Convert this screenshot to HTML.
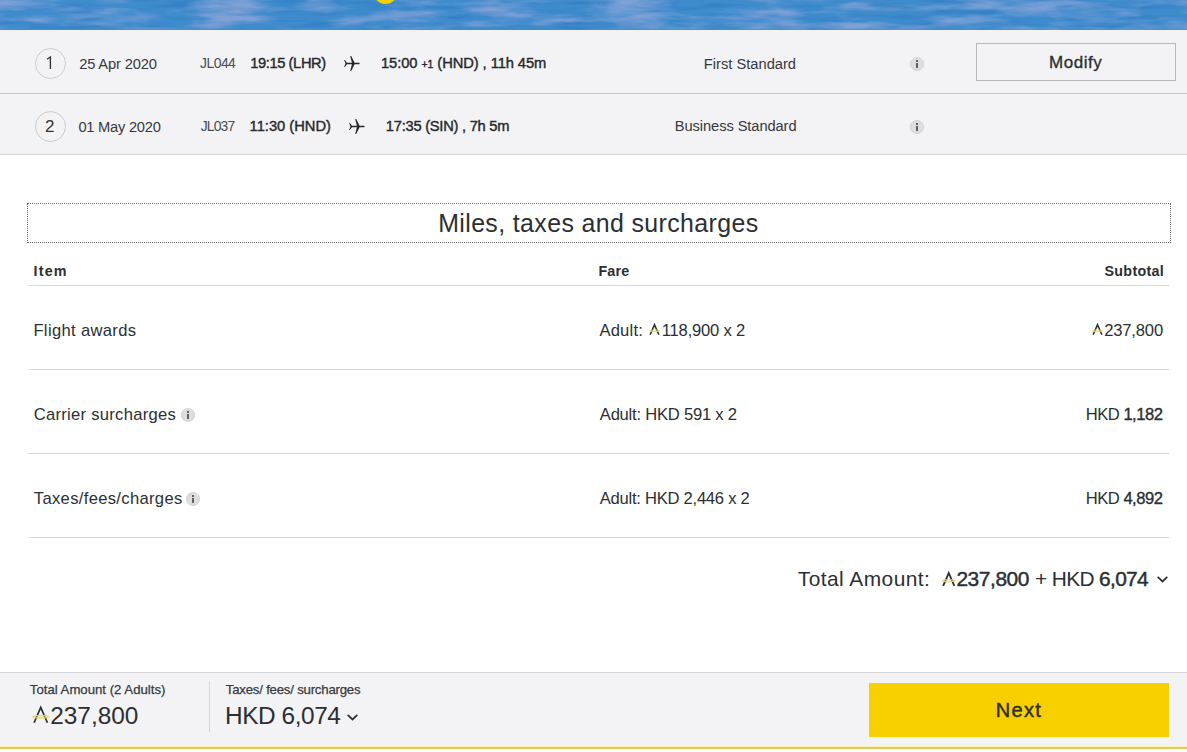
<!DOCTYPE html>
<html><head><meta charset="utf-8">
<style>
*{margin:0;padding:0;box-sizing:border-box}
html,body{width:1187px;height:752px;overflow:hidden;background:#fff;font-family:"Liberation Sans",sans-serif;color:#2b2f33}
.abs{position:absolute;white-space:nowrap}
#banner{position:absolute;left:0;top:0;width:1187px;height:30px;background:#4d8fce;overflow:hidden}
.row{position:absolute;left:0;width:1187px;background:#f3f3f5}
#r1{top:30px;height:64px;border-bottom:1px solid #c6c6c8}
#r2{top:94px;height:61px;border-bottom:1px solid #d4d4d6}
.circ{position:absolute;width:31px;height:31px;border:1px solid #cdcdcd;border-radius:50%}
.info{position:absolute;width:14px;height:14px;border-radius:50%;background:#dedede;border:1px solid #d2d2d2}
.info:before{content:"";position:absolute;left:5px;top:2px;width:2px;height:2px;background:#606060}
.info:after{content:"";position:absolute;left:5px;top:5px;width:2px;height:5px;background:#606060}
#modify{position:absolute;left:976px;top:43px;width:200px;height:38px;border:1px solid #b8b8ba;background:#f3f3f5}
#title{position:absolute;left:27px;top:203px;width:1144px;height:40px;border:1px dotted #6a6a6a}
.hr{position:absolute;left:29px;width:1140px;height:1px;background:#d6d6d6}
#footer{position:absolute;left:0;top:672px;width:1187px;height:80px;background:#f3f3f5;border-top:1px solid #d6d6d8}
#yline{position:absolute;left:0;top:746px;width:1187px;height:4px;background:linear-gradient(#faf3b0 0 1px,#dfcb66 1px 3px,#fdfbc8 3px 4px)}
#wline{position:absolute;left:0;top:750px;width:1187px;height:2px;background:#fff}
#next{position:absolute;left:869px;top:683px;width:300px;height:54px;background:#f8d000}
svg{position:absolute;overflow:visible}
.sb{-webkit-text-stroke:0.35px currentColor}
</style></head><body>
<div id="banner">
<svg width="1187" height="30" style="left:0;top:0">
<defs>
<filter id="tx1" x="0" y="0" width="100%" height="100%" color-interpolation-filters="sRGB"><feTurbulence type="fractalNoise" baseFrequency="0.015 0.09" numOctaves="4" seed="4"/><feColorMatrix values="0 0 0 0 0.50  0 0 0 0 0.63  0 0 0 0 0.84  2.8 0 0 0 -1.15"/></filter>
<filter id="tx2" x="0" y="0" width="100%" height="100%" color-interpolation-filters="sRGB"><feTurbulence type="fractalNoise" baseFrequency="0.02 0.2" numOctaves="2" seed="11"/><feColorMatrix values="0 0 0 0 0.20  0 0 0 0 0.50  0 0 0 0 0.78  2.4 0 0 0 -1.0"/></filter>
</defs>
<rect width="1187" height="30" fill="#3f8ccd"/>
<rect width="1187" height="30" filter="url(#tx2)"/>
<rect width="1187" height="30" filter="url(#tx1)"/>
<rect y="29" width="1187" height="1" fill="#5a86b8" opacity="0.5"/>
<circle cx="385.5" cy="-8" r="12" fill="#f8d000"/>
</svg>
</div>
<div class="row" id="r1"></div>
<div class="row" id="r2"></div>
<div class="circ" style="left:35px;top:48px"></div>
<div class="circ" style="left:35px;top:111px"></div>
<div class="info" style="left:910px;top:57px"></div>
<div class="info" style="left:910px;top:120px"></div>
<div id="modify"></div>
<div id="title"></div>
<div class="hr" style="top:285px"></div>
<div class="hr" style="top:369px"></div>
<div class="hr" style="top:453px"></div>
<div class="hr" style="top:537px"></div>
<div class="info" style="left:181px;top:408px"></div>
<div class="info" style="left:186px;top:492px"></div>
<div id="footer"></div>
<div style="position:absolute;left:209px;top:681px;width:1px;height:51px;background:#d4d4d6"></div>
<div id="next"></div>
<div id="yline"></div>
<div id="wline"></div>
<svg class="ic" width="8" height="14" style="left:45px;top:56px"><path d="M2 3.2 L5.4 0.9 L5.4 12.9" fill="none" stroke="#333" stroke-width="1.35" stroke-linejoin="miter"/></svg>
<svg class="ic" width="16" height="15" style="left:344px;top:56px"><path d="M6.2 0 L7.2 0.1 L10.6 6.75 L15.3 6.75 Q16.1 7.5 15.3 8.25 L10.6 8.25 L7.2 14.9 L6.2 15 L7.9 8.25 L3 8.25 L0.8 10.9 L0.1 10.9 L1.5 7.5 L0.1 4.1 L0.8 4.1 L3 6.75 L7.9 6.75 Z" fill="#26292c"/></svg>
<svg class="ic" width="16" height="15" style="left:349px;top:119px"><path d="M6.2 0 L7.2 0.1 L10.6 6.75 L15.3 6.75 Q16.1 7.5 15.3 8.25 L10.6 8.25 L7.2 14.9 L6.2 15 L7.9 8.25 L3 8.25 L0.8 10.9 L0.1 10.9 L1.5 7.5 L0.1 4.1 L0.8 4.1 L3 6.75 L7.9 6.75 Z" fill="#26292c"/></svg>
<svg class="ic" width="11" height="11.2" viewBox="0 0 10 11" style="left:648.5px;top:324.3px"><path d="M0.7 10.6 L5 0.7 L9.3 10.6" fill="none" stroke="#2b2f33" stroke-width="1.55"/><ellipse cx="5" cy="6.7" rx="5.1" ry="0.85" fill="#f6df6a" fill-opacity="0.35" stroke="#f0d44a" stroke-width="0.75"/></svg>
<svg class="ic" width="11" height="11.2" viewBox="0 0 10 11" style="left:1092px;top:324.3px"><path d="M0.7 10.6 L5 0.7 L9.3 10.6" fill="none" stroke="#2b2f33" stroke-width="1.55"/><ellipse cx="5" cy="6.7" rx="5.1" ry="0.85" fill="#f6df6a" fill-opacity="0.35" stroke="#f0d44a" stroke-width="0.75"/></svg>
<svg class="ic" width="13.5" height="14.3" viewBox="0 0 10 11" style="left:942px;top:571.8px"><path d="M0.7 10.6 L5 0.7 L9.3 10.6" fill="none" stroke="#2b2f33" stroke-width="1.4"/><ellipse cx="5" cy="6.7" rx="5.1" ry="0.85" fill="#f6df6a" fill-opacity="0.35" stroke="#f0d44a" stroke-width="0.75"/></svg>
<svg class="ic" width="15.5" height="17.7" viewBox="0 0 10 11" style="left:32.5px;top:706.3px"><path d="M0.7 10.6 L5 0.7 L9.3 10.6" fill="none" stroke="#2b2f33" stroke-width="1.1"/><ellipse cx="5" cy="6.7" rx="5.1" ry="0.85" fill="#f6df6a" fill-opacity="0.35" stroke="#f0d44a" stroke-width="0.75"/></svg>
<svg class="ic" width="11" height="6.3" viewBox="0 0 11 6" style="left:1157px;top:576px"><path d="M0.7 0.7 L5.5 5.3 L10.3 0.7" fill="none" stroke="#2b2f33" stroke-width="1.7"/></svg>
<svg class="ic" width="11" height="6.3" viewBox="0 0 11 6" style="left:347.4px;top:714px"><path d="M0.7 0.7 L5.5 5.3 L10.3 0.7" fill="none" stroke="#2b2f33" stroke-width="1.7"/></svg>
<div class="abs" id="d1" style="left:79.20px;top:57.00px;font-size:14.7px;line-height:15px;letter-spacing:-0.150px;font-weight:400;color:#36393d">25 Apr 2020</div>
<div class="abs" id="f1" style="left:200.00px;top:56.38px;font-size:13.9px;line-height:14px;letter-spacing:-0.500px;font-weight:400;color:#4a4d50">JL044</div>
<div class="abs" id="t1a" style="left:250.20px;top:55.60px;font-size:14.7px;line-height:15px;letter-spacing:-0.400px;font-weight:400;-webkit-text-stroke:0.4px #26292c;color:#26292c">19:15 (LHR)</div>
<div class="abs" id="t1b" style="left:381.00px;top:55.60px;font-size:14.7px;line-height:15px;letter-spacing:-0.065px;font-weight:400;-webkit-text-stroke:0.4px #26292c;color:#26292c">15:00 <span style="font-size:10.5px">+1</span> (HND) , 11h 45m</div>
<div class="abs" id="c1" style="left:703.80px;top:56.80px;font-size:14.7px;line-height:15px;letter-spacing:0.000px;font-weight:400;color:#36393d">First Standard</div>
<div class="abs" id="mod" style="left:1049.10px;top:54.41px;font-size:17.0px;line-height:17px;letter-spacing:0.540px;font-weight:400;-webkit-text-stroke:0.3px #2b2e31;color:#2b2e31">Modify</div>
<div class="abs" id="d2" style="left:78.40px;top:120.00px;font-size:14.7px;line-height:15px;letter-spacing:-0.250px;font-weight:400;color:#36393d">01 May 2020</div>
<div class="abs" id="f2" style="left:200.80px;top:119.38px;font-size:13.9px;line-height:14px;letter-spacing:-0.875px;font-weight:400;color:#4a4d50">JL037</div>
<div class="abs" id="t2a" style="left:249.60px;top:118.60px;font-size:14.7px;line-height:15px;letter-spacing:0.000px;font-weight:400;-webkit-text-stroke:0.4px #26292c;color:#26292c">11:30 (HND)</div>
<div class="abs" id="t2b" style="left:385.80px;top:118.60px;font-size:14.7px;line-height:15px;letter-spacing:-0.250px;font-weight:400;-webkit-text-stroke:0.4px #26292c;color:#26292c">17:35 (SIN) , 7h 5m</div>
<div class="abs" id="c2" style="left:674.80px;top:118.60px;font-size:14.7px;line-height:15px;letter-spacing:-0.094px;font-weight:400;color:#36393d">Business Standard</div>
<div class="abs" id="ttl" style="left:438.20px;top:210.87px;font-size:24.9px;line-height:25px;letter-spacing:0.385px;font-weight:400;color:#2b2f33">Miles, taxes and surcharges</div>
<div class="abs" id="hi" style="left:33.60px;top:263.84px;font-size:14.3px;line-height:14px;letter-spacing:1.167px;font-weight:700;color:#2b2f33">Item</div>
<div class="abs" id="hf" style="left:598.40px;top:263.84px;font-size:14.3px;line-height:14px;letter-spacing:0.167px;font-weight:700;color:#2b2f33">Fare</div>
<div class="abs" id="hs" style="right:23.00px;top:263.84px;font-size:14.3px;line-height:14px;letter-spacing:0.286px;font-weight:700;color:#2b2f33">Subtotal</div>
<div class="abs" id="i1" style="left:33.40px;top:322.25px;font-size:16.6px;line-height:17px;letter-spacing:0.333px;font-weight:400;color:#2b2f33">Flight awards</div>
<div class="abs" id="a1" style="left:599.40px;top:322.25px;font-size:16.6px;line-height:17px;letter-spacing:0.200px;font-weight:400;color:#2b2f33">Adult:</div>
<div class="abs" id="a1b" style="left:661.80px;top:322.25px;font-size:16.6px;line-height:17px;letter-spacing:-0.200px;font-weight:400;color:#2b2f33">118,900 x 2</div>
<div class="abs" id="s1" style="right:24.00px;top:322.25px;font-size:16.6px;line-height:17px;letter-spacing:-0.167px;font-weight:400;color:#2b2f33">237,800</div>
<div class="abs" id="i2" style="left:33.80px;top:406.15px;font-size:16.6px;line-height:17px;letter-spacing:0.265px;font-weight:400;color:#2b2f33">Carrier surcharges</div>
<div class="abs" id="a2" style="left:599.80px;top:406.15px;font-size:16.6px;line-height:17px;letter-spacing:-0.235px;font-weight:400;color:#2b2f33">Adult: HKD 591 x 2</div>
<div class="abs" id="s2" style="right:24.60px;top:406.15px;font-size:16.6px;line-height:17px;letter-spacing:-0.500px;font-weight:400;color:#2b2f33">HKD <span class="sb">1,182</span></div>
<div class="abs" id="i3" style="left:33.80px;top:489.55px;font-size:16.6px;line-height:17px;letter-spacing:0.324px;font-weight:400;color:#2b2f33">Taxes/fees/charges</div>
<div class="abs" id="a3" style="left:599.80px;top:489.55px;font-size:16.6px;line-height:17px;letter-spacing:-0.263px;font-weight:400;color:#2b2f33">Adult: HKD 2,446 x 2</div>
<div class="abs" id="s3" style="right:24.60px;top:489.55px;font-size:16.6px;line-height:17px;letter-spacing:-0.500px;font-weight:400;color:#2b2f33">HKD <span class="sb">4,892</span></div>
<div class="abs" id="tt" style="left:797.80px;top:568.35px;font-size:20.9px;line-height:21px;letter-spacing:0.458px;font-weight:400;color:#2b2f33">Total Amount:</div>
<div class="abs" id="tv1" style="left:956.40px;top:568.35px;font-size:20.9px;line-height:21px;letter-spacing:-0.417px;font-weight:400;-webkit-text-stroke:0.45px #2b2f33;color:#2b2f33">237,800</div>
<div class="abs" id="tv2" style="left:1035.00px;top:568.35px;font-size:20.9px;line-height:21px;letter-spacing:-0.650px;font-weight:400;color:#2b2f33">+ HKD <span class="sb" style="-webkit-text-stroke-width:0.45px">6,074</span></div>
<div class="abs" id="ft1" style="left:29.80px;top:682.92px;font-size:13.2px;line-height:13px;letter-spacing:-0.000px;font-weight:400;-webkit-text-stroke:0.25px #36393d;color:#36393d">Total Amount (2 Adults)</div>
<div class="abs" id="fv1" style="left:50.20px;top:703.64px;font-size:24.4px;line-height:24px;letter-spacing:-0.000px;font-weight:400;color:#2b2f33">237,800</div>
<div class="abs" id="ft2" style="left:225.80px;top:682.92px;font-size:13.2px;line-height:13px;letter-spacing:-0.205px;font-weight:400;-webkit-text-stroke:0.25px #36393d;color:#36393d">Taxes/ fees/ surcharges</div>
<div class="abs" id="fv2" style="left:225.10px;top:703.64px;font-size:24.4px;line-height:24px;letter-spacing:-0.438px;font-weight:400;color:#2b2f33">HKD 6,074</div>
<div class="abs" id="nx" style="left:995.80px;top:699.97px;font-size:20.0px;line-height:20px;letter-spacing:1.267px;font-weight:400;-webkit-text-stroke:0.45px #2e2e2a;color:#2e2e2a">Next</div>
<div class="abs" id="n2" style="left:45.00px;top:118.21px;font-size:17.0px;line-height:17px;letter-spacing:0.000px;font-weight:400;color:#333333">2</div>
</body></html>
